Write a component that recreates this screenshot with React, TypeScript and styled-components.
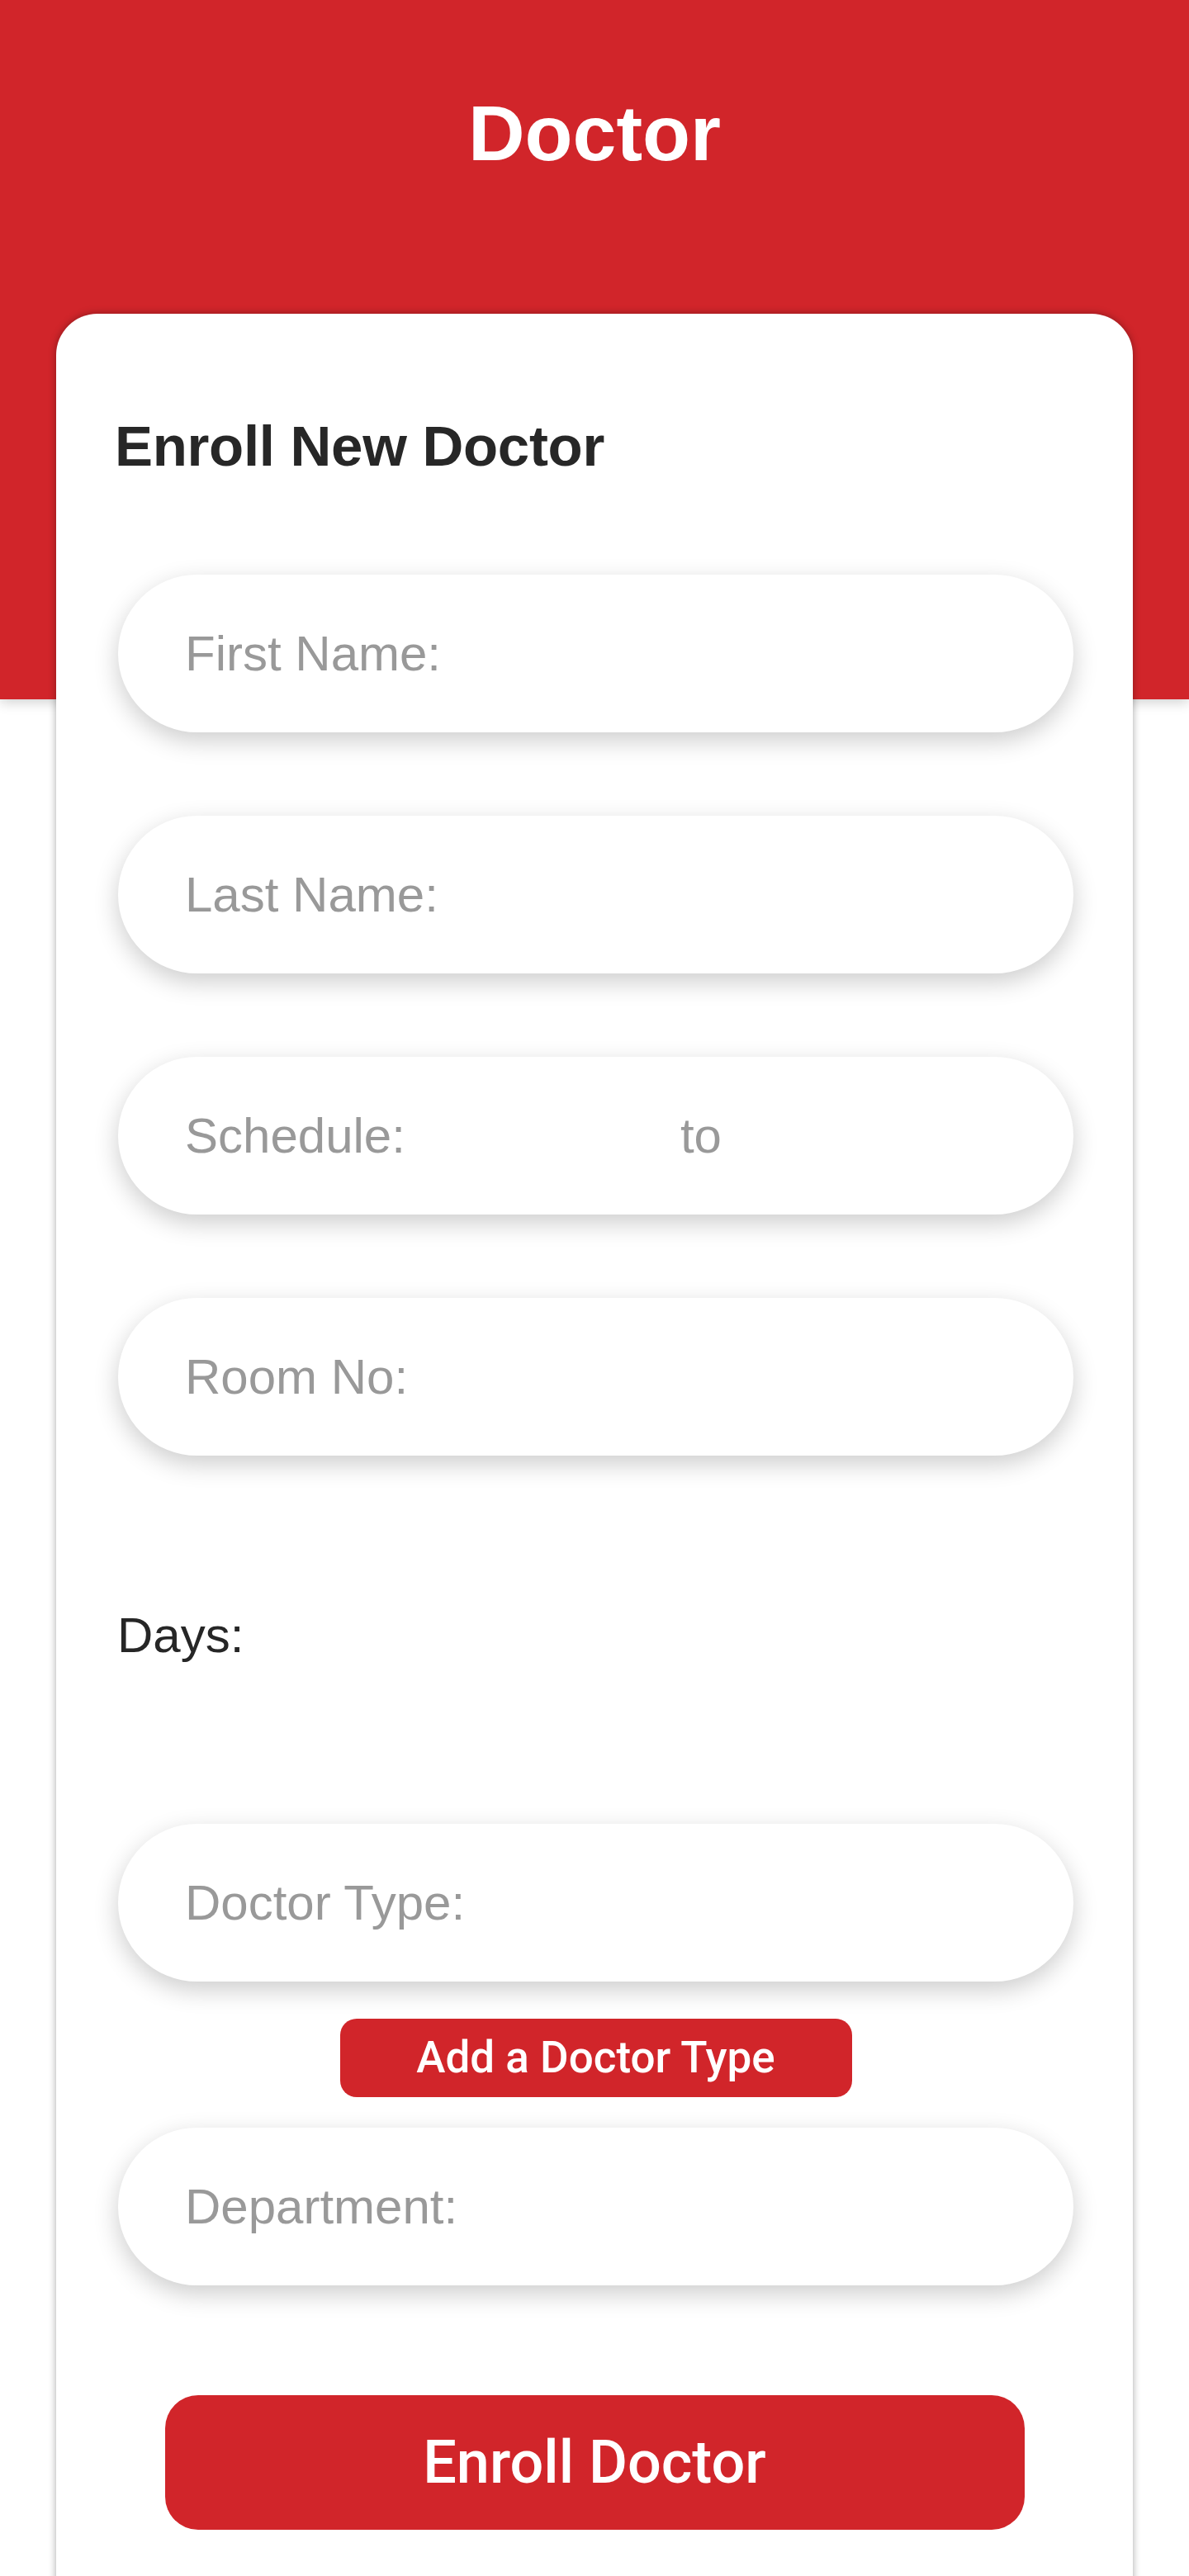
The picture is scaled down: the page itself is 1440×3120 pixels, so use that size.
import React from "react";
import styled, { createGlobalStyle } from "styled-components";

const RED = "#d1252a";
const SANS = `"Liberation Sans", Arial, Helvetica, sans-serif`;
const UI = `Roboto, "Liberation Sans", Arial, sans-serif`;

const GlobalStyle = createGlobalStyle`
  html, body {
    margin: 0;
    padding: 0;
    background: #ffffff;
  }
  body {
    font-family: ${SANS};
  }
  * { box-sizing: border-box; }
`;

const Page = styled.div`
  min-height: 3120px;
  display: flex;
  flex-direction: column;
  background: #ffffff;
  overflow: hidden;
`;

const Header = styled.header`
  height: 847px;
  background: ${RED};
  padding-top: 114px;
  display: flex;
  justify-content: center;
  align-items: flex-start;
  box-shadow: 0 4px 14px rgba(0, 0, 0, 0.18);
`;

const Title = styled.h1`
  margin: 0;
  font-family: ${SANS};
  font-weight: 700;
  font-size: 95px;
  line-height: 1;
  color: #ffffff;
`;

const Card = styled.main`
  position: relative;
  z-index: 1;
  margin: -467px 68px 0;
  background: #ffffff;
  border-radius: 50px 50px 0 0;
  box-shadow: 0 0 10px rgba(0, 0, 0, 0.35);
  padding: 126px 72px 160px 75px;
  display: flex;
  flex-direction: column;
`;

const CardTitle = styled.h2`
  margin: 0 0 121px -4px;
  font-family: ${SANS};
  font-weight: 700;
  font-size: 69px;
  line-height: 1;
  letter-spacing: -0.3px;
  color: #272727;
`;

const Field = styled.div<{ $gap?: number }>`
  height: 191px;
  border-radius: 96px;
  background: #ffffff;
  box-shadow: 0 10px 30px rgba(0, 0, 0, 0.2);
  display: flex;
  align-items: center;
  padding: 0 60px 0 81px;
  margin-bottom: ${(p) => (p.$gap ?? 101)}px;
  font-family: ${SANS};
  font-size: 60px;
  color: #999999;
`;

const FieldInput = styled.input`
  flex: 1;
  min-width: 0;
  border: none;
  outline: none;
  background: transparent;
  font: inherit;
  color: #333333;
  padding: 0;
  &::placeholder {
    color: #999999;
    opacity: 1;
  }
`;

const FieldLabel = styled.span`
  flex: none;
  line-height: 1;
`;

const TimeSlot = styled.input`
  flex: none;
  width: 333px;
  border: none;
  outline: none;
  background: transparent;
  font: inherit;
  padding: 0;
`;

const DaysLabel = styled.div`
  font-family: ${SANS};
  font-size: 60px;
  line-height: 1;
  color: #262626;
  margin: 188px 0 198px -1px;
`;

const SmallButton = styled.button`
  align-self: center;
  width: 620px;
  height: 95px;
  margin: -56px 0 37px 0;
  border: none;
  border-radius: 20px;
  background: ${RED};
  color: #ffffff;
  font-family: ${UI};
  font-weight: 500;
  font-size: 53px;
  line-height: 1;
  cursor: pointer;
`;

const PrimaryButton = styled.button`
  align-self: center;
  width: 1041px;
  height: 163px;
  margin-top: 133px;
  margin-left: -3px;
  border: none;
  border-radius: 40px;
  background: ${RED};
  color: #ffffff;
  font-family: ${UI};
  font-weight: 500;
  font-size: 72px;
  line-height: 1;
  cursor: pointer;
`;

export default function App() {
  return (
    <Page>
      <GlobalStyle />
      <Header>
        <Title>Doctor</Title>
      </Header>
      <Card>
        <CardTitle>Enroll New Doctor</CardTitle>
        <Field>
          <FieldInput placeholder="First Name:" />
        </Field>
        <Field>
          <FieldInput placeholder="Last Name:" />
        </Field>
        <Field>
          <FieldLabel>Schedule:</FieldLabel>
          <TimeSlot aria-label="Start time" />
          <FieldLabel>to</FieldLabel>
          <TimeSlot aria-label="End time" />
        </Field>
        <Field $gap={0}>
          <FieldInput placeholder="Room No:" />
        </Field>
        <DaysLabel>Days:</DaysLabel>
        <Field>
          <FieldInput placeholder="Doctor Type:" />
        </Field>
        <SmallButton>Add a Doctor Type</SmallButton>
        <Field $gap={0}>
          <FieldInput placeholder="Department:" />
        </Field>
        <PrimaryButton>Enroll Doctor</PrimaryButton>
      </Card>
    </Page>
  );
}
